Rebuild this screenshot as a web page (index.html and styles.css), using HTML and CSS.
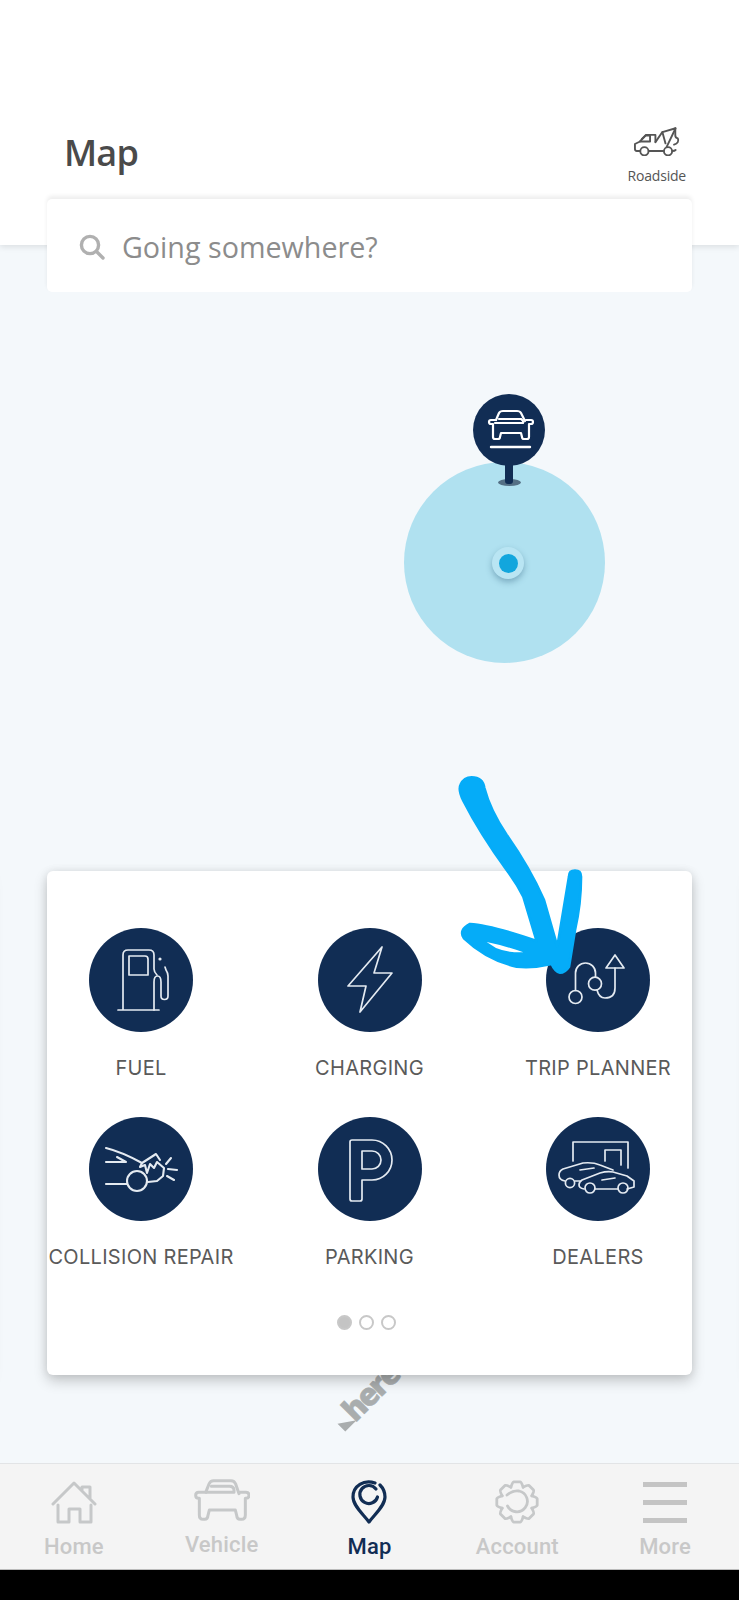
FILE: index.html
```html
<!DOCTYPE html>
<html lang="en">
<head>
    <meta charset="UTF-8">
    <meta name="viewport" content="width=device-width, initial-scale=1.0">
    <title>Map</title>
    <link rel="stylesheet" href="styles.css">
</head>
<body>
    <div class="screen">
        <header class="top">
            <h1 class="top-title">Map</h1>
            <div class="roadside">
                <svg class="roadside-icon" viewBox="35 30 150 92" fill="none" stroke="#555" stroke-width="6" stroke-linecap="round" stroke-linejoin="round">
                    <path d="M56 106H46q-6 0-6-7V84l16-8 19-21h30v22"/>
                    <path d="M62 68l12-11h14v19H56"/>
                    <path d="M84 106h47M159 106q7 0 10-3"/>
                    <path d="M105 78l22-32 42-12-28 58"/>
                    <path d="M127 46l10 36M168 34v22q0 8 8 10 6 14-12 20"/>
                    <circle cx="70" cy="107" r="13"/>
                    <circle cx="145" cy="107" r="13"/>
                </svg>
                <span class="roadside-label">Roadside</span>
            </div>
        </header>

        <div class="search">
            <svg class="search-icon" viewBox="0 0 26 26" fill="none" stroke="#b0b0b0" stroke-width="3.4" stroke-linecap="round">
                <circle cx="11" cy="11" r="8.6"/>
                <path d="M17.5 17.5l6.5 6.5"/>
            </svg>
            <span class="search-text">Going somewhere?</span>
        </div>

        <main class="map">
            <div class="range"></div>
            <div class="location"><div class="location-dot"></div></div>

            <div class="pin">
                <div class="pin-head">
                    <svg viewBox="0 0 72 72" fill="none" stroke="#fff" stroke-width="2.2" stroke-linecap="round" stroke-linejoin="round">
                        <path d="M23 26l3-7q1-2 4-2h14q3 0 4 2l4 8"/>
                        <path d="M26 25h22q3 2 2 4H22"/>
                        <path d="M23 26h-5q-2 0-2 2t2 2h2v13q0 2 2 2h3q2 0 2-2l1-4h20l1 4q0 2 2 2h3q2 0 2-2V30h2q2 0 2-2t-2-2h-5"/>
                        <path d="M18 53h39" stroke-width="2.4"/>
                    </svg>
                </div>
                <div class="pin-stem"></div>
                <div class="pin-shadow"></div>
            </div>

            <div class="here"><span class="here-mark"></span><span class="here-text">here</span></div>

            <section class="card">
                <div class="card-peek card-peek-left"></div>
                <div class="card-peek card-peek-right"></div>
                <div class="card-grid">
                    <div class="service">
                        <svg class="service-icon" viewBox="0 0 104 104">
                            <path d="M29 82h41M34 82V27q0-5 5-5h21q5 0 5 5v14q0 3 3 6"/>
                            <path d="M59 47H40V28h16q3 0 3 3z"/>
                            <path d="M65 82V54q0-6 3.500-6t3.500 6v14q0 3.500 3.500 3.500T79 68V48q0-3-2-6l-1-3"/>
                            <circle class="fill" cx="71" cy="31" r="1.600"/>
                        </svg>
                        <span class="service-label">FUEL</span>
                    </div>
                    <div class="service">
                        <svg class="service-icon" viewBox="0 0 104 104">
                            <path d="M64 19L56 45H74L42 84L48 58H30z"/>
                        </svg>
                        <span class="service-label">CHARGING</span>
                    </div>
                    <div class="service">
                        <svg class="service-icon" viewBox="0 0 104 104">
                            <circle cx="29.500" cy="69" r="6.500"/>
                            <circle cx="49" cy="55.700" r="6.500"/>
                            <path d="M29.500 62.500V45a10 10 0 0 1 20 0v4"/>
                            <path d="M51 62q2 8 8 8 10 0 10-10V40"/>
                            <path d="M69 27l-9 13h18z"/>
                        </svg>
                        <span class="service-label">TRIP PLANNER</span>
                    </div>
                    <div class="service">
                        <svg class="service-icon service-icon-bold" viewBox="0 0 104 104">
                            <path d="M17 31q16 4 36 15l14-9 4 6"/>
                            <path d="M17 45h20l-9-5"/>
                            <path d="M53 46l-2 4 5-2 2 8 3-9 4 4 3-6 7 6-1 8-6 5-9 1"/>
                            <path d="M17 67h21"/>
                            <circle cx="48" cy="64" r="10"/>
                            <path d="M77 47l5-6M79 52l9 1M78 59l7 4"/>
                        </svg>
                        <span class="service-label">COLLISION REPAIR</span>
                    </div>
                    <div class="service">
                        <svg class="service-icon" viewBox="0 0 104 104">
                            <path d="M32 25q0-2 2-2H54a20 20 0 0 1 0 40H44V82q0 2-2 2H34q-2 0-2-2z"/>
                            <path d="M44 34V52H54a9 9 0 0 0 0-18z"/>
                        </svg>
                        <span class="service-label">PARKING</span>
                    </div>
                    <div class="service">
                        <svg class="service-icon" viewBox="0 0 104 104">
                            <path d="M27 44V25H82V51M59 44V33H75V48"/>
                            <path d="M19 64q-6-1-6-6 0-4 4-6l20-6q10-1 17 2l13 5M29 64h5"/>
                            <circle cx="24" cy="66" r="4.600"/>
                            <path d="M34 53l14-2"/>
                            <path d="M38 72q-5-1-5-4t3-5l18-7q7-2 13-1l14 4 7 5v6l-7 2M49 72h23"/>
                            <circle cx="44" cy="71" r="5"/>
                            <circle cx="77" cy="71" r="5"/>
                            <path d="M56 63l13-2"/>
                        </svg>
                        <span class="service-label">DEALERS</span>
                    </div>
                </div>
                <div class="dots">
                    <span class="dot dot-active"></span>
                    <span class="dot"></span>
                    <span class="dot"></span>
                </div>
            </section>
        </main>

        <nav class="tabs">
            <div class="tab">
                <svg class="tab-icon" width="46" height="44" viewBox="0 0 46 44" fill="none" stroke="#c6c8c9" stroke-width="3" stroke-linecap="round" stroke-linejoin="round">
                    <path d="M2 24L23 3 44 24M31 10V7h8v11"/>
                    <path d="M7 25v17h11V29h11v13h11V25"/>
                </svg>
                <span class="tab-label">Home</span>
            </div>
            <div class="tab tab-vehicle">
                <svg class="tab-icon" width="56" height="42" viewBox="0 0 168 126" fill="none" stroke="#c6c8c9" stroke-width="9" stroke-linecap="round" stroke-linejoin="round">
                    <path d="M36 38l9-23q4-10 14-10h52q10 0 14 10l10 29"/>
                    <path d="M52 22h54q14 0 14 12v6H36"/>
                    <path d="M36 40H14Q5 40 5 49t9 9h2v50q0 13 11 13h5q9 0 10-12l4-16h78l4 16q1 12 10 12h5q11 0 11-13V58h2q9 0 9-9t-9-9h-18"/>
                </svg>
                <span class="tab-label">Vehicle</span>
            </div>
            <div class="tab tab-active">
                <svg class="tab-icon" width="36" height="44" viewBox="0 0 36 44" fill="none" stroke="#112d54" stroke-width="3.200" stroke-linecap="round" stroke-linejoin="round">
                    <path d="M24 3C13-1 2 6 2 17c0 9 11 18 16 25 5-7 16-16 16-25 0-5-2-9-5-12"/>
                    <path d="M25 9A9 9 0 1 0 26.500 17"/>
                </svg>
                <span class="tab-label">Map</span>
            </div>
            <div class="tab">
                <svg class="tab-icon" width="44" height="44" viewBox="0 0 44 44" fill="none" stroke="#c6c8c9" stroke-width="2.800" stroke-linecap="round" stroke-linejoin="round">
                    <path id="gearTooth" d="M15.900 7.200Q17.500 2 18.800 1.800H25.200Q26.500 2 28.100 7.200"/>
                    <use href="#gearTooth" transform="rotate(45 22 22)"/>
                    <use href="#gearTooth" transform="rotate(90 22 22)"/>
                    <use href="#gearTooth" transform="rotate(135 22 22)"/>
                    <use href="#gearTooth" transform="rotate(180 22 22)"/>
                    <use href="#gearTooth" transform="rotate(225 22 22)"/>
                    <use href="#gearTooth" transform="rotate(270 22 22)"/>
                    <use href="#gearTooth" transform="rotate(315 22 22)"/>
                    <path d="M12 15q6-5 12-4A10.500 10.500 0 1 1 12.500 26"/>
                </svg>
                <span class="tab-label">Account</span>
            </div>
            <div class="tab">
                <div class="tab-icon menu">
                    <span class="menu-bar"></span>
                    <span class="menu-bar"></span>
                    <span class="menu-bar"></span>
                </div>
                <span class="tab-label">More</span>
            </div>
        </nav>
        <div class="sysbar"></div>

        <svg class="scribble" viewBox="0 0 780 960">
            <path d="M95 52Q128 52 133 84Q150 150 200 225Q270 325 312 420L352 560L387 350Q387 332 405 332Q423 332 423 350Q423 430 405 510L387 620Q375 638 360 638Q345 635 335 612Q280 625 230 620Q140 600 72 535Q55 510 90 492Q150 495 290 543L250 410Q230 370 200 330Q120 220 70 122Q54 90 62 74Q72 52 95 52Z"/>
            <path class="scribble-gap" d="M140 546Q190 556 250 577Q200 578 168 564z"/>
        </svg>
    </div>
</body>
</html>
```
FILE: styles.css
```css
* {
    box-sizing: border-box;
}

body {
    margin: 0;
    background: #f4f8fb;
    font-family: "Open Sans", sans-serif;
}

.screen {
    position: relative;
    width: 739px;
    height: 1600px;
    display: flex;
    flex-direction: column;
    overflow: hidden;
}

.top {
    height: 245px;
    flex-shrink: 0;
    padding: 127px 53px 0 64px;
    background: #fff;
    display: flex;
    justify-content: space-between;
    align-items: flex-start;
    box-shadow: 0 2px 6px rgba(0,0,0,0.1);
}

.top-title {
    margin: 1px 0 0;
    font-size: 36px;
    line-height: 50px;
    font-weight: 600;
    letter-spacing: -0.8px;
    color: #4a4a4a;
}

.roadside {
    display: flex;
    flex-direction: column;
    align-items: center;
    gap: 11px;
}

.roadside-icon {
    width: 48px;
    height: 29px;
}

.roadside-label {
    font-size: 14px;
    line-height: 18px;
    letter-spacing: -0.2px;
    color: #555;
}

.search {
    position: relative;
    height: 93px;
    flex-shrink: 0;
    margin: -46px 47px 0;
    padding-left: 32px;
    background: #fff;
    border-radius: 5px;
    display: flex;
    align-items: center;
    gap: 17px;
    box-shadow: 0 -3px 4px rgba(0,0,0,0.07);
}

.search-icon {
    width: 26px;
    height: 26px;
    margin-top: 2px;
}

.search-text {
    font-size: 28.700px;
    line-height: 38px;
    margin-top: 2px;
    color: #8c8c8c;
}

.map {
    position: relative;
    flex: 1;
    padding: 0 47px 88px;
    display: flex;
    flex-direction: column;
    justify-content: flex-end;
}

.range {
    position: absolute;
    left: 404px;
    top: 170px;
    width: 201px;
    height: 201px;
    border-radius: 50%;
    background: #b0e1f0;
}

.location {
    position: absolute;
    left: 492px;
    top: 255px;
    width: 32px;
    height: 32px;
    border-radius: 50%;
    background: #b9e5f3;
    box-shadow: 0 3px 6px rgba(40,90,120,0.4);
    display: flex;
    align-items: center;
    justify-content: center;
}

.location-dot {
    width: 19px;
    height: 19px;
    border-radius: 50%;
    background: #12a6dd;
}

.pin {
    position: absolute;
    left: 473px;
    top: 102px;
    width: 72px;
    display: flex;
    flex-direction: column;
    align-items: center;
}

.pin-head {
    width: 72px;
    height: 72px;
    border-radius: 50%;
    background: #112d54;
}

.pin-head svg {
    display: block;
}

.pin-stem {
    position: relative;
    width: 8px;
    height: 19px;
    margin-top: -1px;
    background: #112d54;
    border-radius: 0 0 3px 3px;
}

.pin-shadow {
    width: 23px;
    height: 7px;
    margin-top: -5px;
    border-radius: 50%;
    background: #557085;
}

.here {
    position: absolute;
    left: 326px;
    top: 1088px;
    display: flex;
    align-items: flex-end;
    transform: rotate(-45deg);
    color: #a9adae;
}

.here-text {
    font-family: "Open Sans", sans-serif;
    font-size: 31px;
    line-height: 32px;
    font-weight: 800;
    letter-spacing: -2px;
    -webkit-text-stroke: 0.6px #a9adae;
}

.here-mark {
    width: 0;
    height: 0;
    margin: 0 -3px 5px 0;
    border-right: 16px solid transparent;
    border-bottom: 11px solid #a9adae;
}

.card {
    position: relative;
    height: 504px;
    padding-top: 57px;
    background: #fff;
    border-radius: 6px;
    box-shadow: 0 6px 14px rgba(0,0,0,0.2), 0 0 8px rgba(0,0,0,0.08);
}

.card-peek {
    position: absolute;
    top: 0;
    width: 645px;
    height: 504px;
    background: #fff;
    box-shadow: 0 6px 14px rgba(0,0,0,0.2);
}

.card-peek-left {
    left: -704px;
}

.card-peek-right {
    left: 704px;
}

.card-grid {
    display: grid;
    grid-template-columns: repeat(3, 188px);
    column-gap: 40.500px;
    row-gap: 37px;
}

.service {
    display: flex;
    flex-direction: column;
    align-items: center;
    gap: 24px;
}

.service-icon {
    width: 104px;
    height: 104px;
    border-radius: 50%;
    background: #112d54;
    fill: none;
    stroke: #e4eaf1;
    stroke-width: 1.700;
    stroke-linecap: round;
    stroke-linejoin: round;
}

.service-icon-bold {
    stroke-width: 2.100;
}

.service-icon .fill {
    fill: #e4eaf1;
    stroke: none;
}

.service-label {
    font-family: Inter, sans-serif;
    font-size: 20px;
    line-height: 24px;
    letter-spacing: 0.3px;
    color: #5a5a5a;
    white-space: nowrap;
}

.dots {
    display: flex;
    justify-content: center;
    gap: 7px;
    margin-top: 46px;
    padding-right: 6px;
}

.dot {
    width: 15px;
    height: 15px;
    border-radius: 50%;
    border: 2px solid #c8c8c8;
}

.dot-active {
    background: #c4c4c4;
}

.tabs {
    height: 107px;
    flex-shrink: 0;
    background: #f4f4f4;
    border-top: 1px solid #e2e4e6;
    border-bottom: 1px solid #bbb;
    padding-top: 16px;
    display: grid;
    grid-template-columns: repeat(5, 1fr);
}

.tab {
    display: flex;
    flex-direction: column;
    align-items: center;
}

.tab-icon {
    height: 44px;
    flex-shrink: 0;
}

.tab-label {
    margin-top: 10px;
    font-family: Roboto, sans-serif;
    font-size: 22px;
    line-height: 26px;
    letter-spacing: 0.2px;
    font-weight: 500;
    color: #c8c8c8;
}

.tab-vehicle .tab-icon {
    margin-top: -2px;
}

.tab-vehicle .tab-label {
    margin-top: 10px;
}

.tab-active .tab-label {
    color: #112d54;
}

.menu {
    width: 44px;
    display: flex;
    flex-direction: column;
    justify-content: space-between;
    padding: 2px 0 1px;
}

.menu-bar {
    height: 5px;
    background: #c4c4c4;
}

.sysbar {
    height: 30px;
    flex-shrink: 0;
    background: #000;
}

.scribble {
    position: absolute;
    left: 440px;
    top: 760px;
    width: 260px;
    height: 320px;
    fill: #05acf8;
    stroke: #05acf8;
    stroke-width: 8;
    stroke-linejoin: round;
}

.scribble-gap {
    fill: #fff;
    stroke: none;
}
```
